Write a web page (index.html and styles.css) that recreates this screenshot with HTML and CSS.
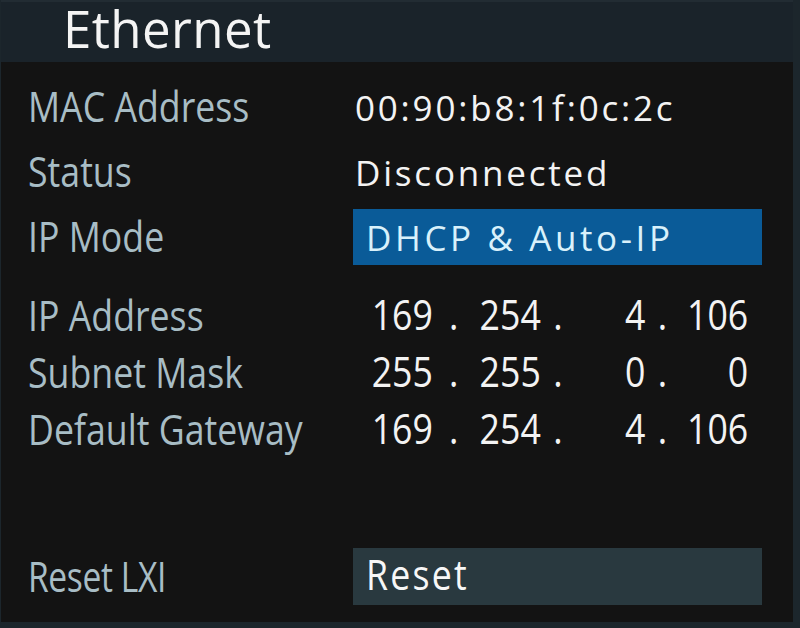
FILE: index.html
```html
<!DOCTYPE html>
<html>
<head>
<meta charset="utf-8">
<link rel="stylesheet" href="styles.css">
</head>
<body>
<div class="screen">
  <div class="header"><span class="title">Ethernet</span></div>
  <div class="body">
    <div class="group top">
      <div class="row"><div class="label">MAC Address</div><div class="value">00:90:b8:1f:0c:2c</div></div>
      <div class="row"><div class="label">Status</div><div class="value">Disconnected</div></div>
      <div class="row"><div class="label">IP Mode</div><div class="value box blue">DHCP &amp; Auto-IP</div></div>
    </div>
    <div class="group ip">
      <div class="row"><div class="label">IP Address</div>
        <div class="ipv"><span class="oct">169</span><span class="dot">.</span><span class="oct">254</span><span class="dot">.</span><span class="oct">4</span><span class="dot">.</span><span class="oct">106</span></div></div>
      <div class="row"><div class="label">Subnet Mask</div>
        <div class="ipv"><span class="oct">255</span><span class="dot">.</span><span class="oct">255</span><span class="dot">.</span><span class="oct">0</span><span class="dot">.</span><span class="oct">0</span></div></div>
      <div class="row"><div class="label">Default Gateway</div>
        <div class="ipv"><span class="oct">169</span><span class="dot">.</span><span class="oct">254</span><span class="dot">.</span><span class="oct">4</span><span class="dot">.</span><span class="oct">106</span></div></div>
    </div>
    <div class="group reset">
      <div class="row"><div class="label lxi">Reset LXI</div><div class="box grey"><span class="btn-text">Reset</span></div></div>
    </div>
  </div>
</div>
</body>
</html>
```
FILE: styles.css
```css
html, body {
  margin: 0;
  padding: 0;
  height: 100%;
}
body {
  background: #1c262c;
  box-sizing: border-box;
  padding: 0 7px 6px 1px;
  font-family: "Open Sans", "Noto Sans", sans-serif;
}
.screen {
  background: #131313;
  height: 100%;
  display: flex;
  flex-direction: column;
}
.header {
  height: 62px;
  background: #1a232a;
  border-top: 2px solid #222c33;
  box-sizing: border-box;
  display: flex;
  align-items: flex-start;
  padding-left: 62px;
}
.title {
  display: block;
  color: #f4f4f4;
  font-size: 51px;
  line-height: 52px;
  letter-spacing: 0.4px;
}
.body {
  display: flex;
  flex-direction: column;
  padding: 17px 30px 0 27px;
}
.group.top {
  display: flex;
  flex-direction: column;
  gap: 9px;
}
.group.top .row { height: 56px; }
.group.ip { margin-top: 22px; }
.group.ip .row { height: 57px; }
.group.reset { margin-top: 90px; }
.group.reset .row { height: 57px; }
.row {
  display: grid;
  grid-template-columns: 325px 409px;
  align-items: center;
}
.label {
  color: #a8bdc5;
  font-size: 42px;
  line-height: 50px;
  white-space: nowrap;
  transform: scaleX(0.85);
  transform-origin: left center;
  margin-top: -2px;
}
.label.lxi {
  transform: scaleX(0.8);
  letter-spacing: -0.5px;
}
.value {
  color: #f3f3f3;
  font-size: 35px;
  letter-spacing: 2.8px;
  padding-left: 2px;
  white-space: nowrap;
}
.box {
  height: 100%;
  display: flex;
  align-items: center;
  box-sizing: border-box;
}
.box.blue {
  background: #0a5b98;
  color: #d9f1fb;
  font-size: 35px;
  letter-spacing: 3.6px;
  padding-left: 13px;
}
.box.grey {
  background: #29393f;
  color: #f7f7f7;
  padding-left: 13px;
}
.btn-text {
  display: inline-block;
  font-size: 42px;
  line-height: 50px;
  letter-spacing: 2.6px;
  transform: scaleX(0.85);
  transform-origin: left center;
  margin-top: -6px;
}
.ipv {
  display: grid;
  grid-template-columns: 94px 49px 78px 40px 83px 40px 81px;
  color: #f3f3f3;
  font-size: 42px;
  line-height: 50px;
  transform: scaleX(0.85);
  transform-origin: left center;
  margin-top: -4px;
}
.oct { text-align: right; }
.dot { text-align: center; }
```
